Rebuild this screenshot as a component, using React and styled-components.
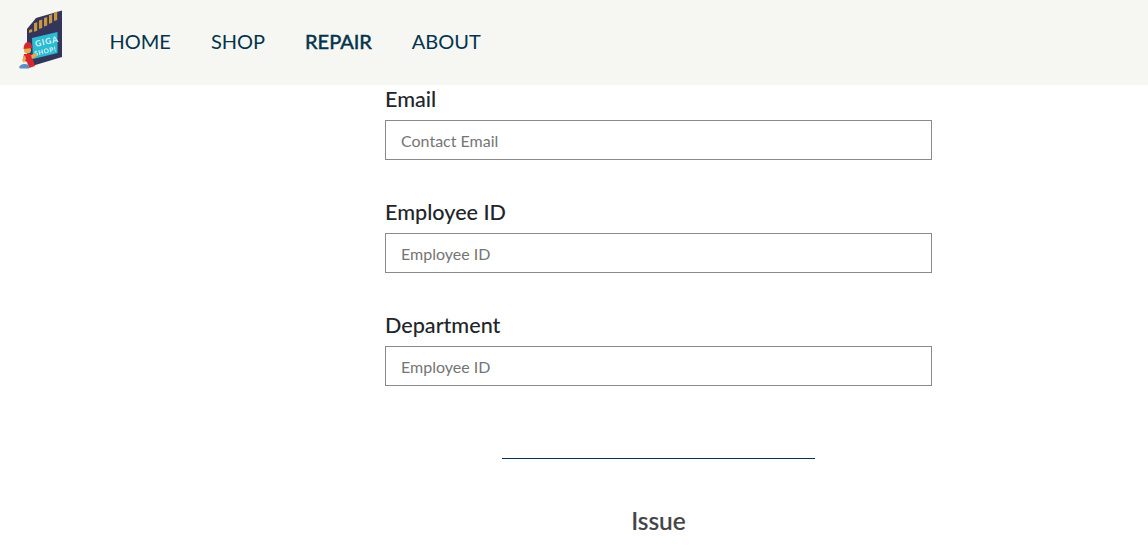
import React from "react";
import styled, { createGlobalStyle } from "styled-components";

const Global = createGlobalStyle`
    html, body {
        margin: 0;
        padding: 0;
        height: 550px;
        overflow: hidden;
        background: #ffffff;
        font-family: Lato, "Liberation Sans", sans-serif;
    }
    * { box-sizing: border-box; }
`

const Header = styled.header`
    height: 85px;
    background-color: #f6f6f2;
    display: flex;
    align-items: center;
    padding: 0 0 0 16px;
`

const Logo = styled.svg`
    width: 50px;
    height: 64px;
    display: block;
    margin-top: -5px;
    filter: blur(0.5px);
`

const Nav = styled.nav`
    display: flex;
    gap: 40px;
    margin-left: 43.5px;
    padding-bottom: 3px;
`

const NavLink = styled.a`
    font-size: 20px;
    line-height: 24px;
    color: #04344b;
    font-weight: 400;
    -webkit-text-stroke: ${(p) => (p.$active ? "0.5px #04344b" : "0")};
    text-decoration: none;
`

const Main = styled.main`
    display: flex;
    flex-direction: column;
    align-items: center;
    width: 547px;
    margin-left: 385px;
`

const Field = styled.div`
    width: 100%;
    margin-bottom: 38px;
`

const Label = styled.label`
    display: block;
    font-size: 21.6px;
    line-height: 26px;
    font-weight: 500;
    color: #212529;
    height: 35px;
    padding-top: 1px;
`

const Input = styled.input`
    display: block;
    width: 100%;
    height: 40px;
    border: 1px solid #8a8a8a;
    border-radius: 0;
    padding: 0 15px;
    font-family: inherit;
    font-size: 16px;
    outline: none;
    &::placeholder {
        color: #757575;
        opacity: 1;
    }
`

const Divider = styled.hr`
    width: 313px;
    height: 1px;
    border: 0;
    margin: 34px 0 0;
    background-color: #04344b;
`

const Issue = styled.h2`
    margin: 47px 0 0;
    font-size: 24.5px;
    line-height: 29px;
    font-weight: 500;
    color: #444444;
    -webkit-text-stroke: 0.2px #444444;
`

const contacts = [29, 34, 39, 44, 49, 54];

function SdLogo() {
    return (
        <Logo viewBox="16 8 50 64">
            <path d="M27 29 L36 18 L62 10.5 V57 L32 66 L27 60 Z" fill="#33365a" />
            <g fill="#c9973f">
                {contacts.map((x, i) => {
                    const top = 28 - i * 2.7 - (i === 0 ? -2 : 2);
                    const h = i === 0 ? 3 : 8.5;
                    return <path key={x} d={`M${x} ${top} l3.2 -1 v${h} l-3.2 1 Z`} />;
                })}
            </g>
            <path d="M32 38 L57.5 32 V53 L33 59 Z" fill="#2bbcd4" />
            <g fill="#cfeef4" fontFamily="Lato, sans-serif" fontWeight="900">
                <text x="36" y="47" fontSize="8.5" letterSpacing="0.8" transform="rotate(-13 36 47)">GIGA</text>
                <text x="35" y="56" fontSize="6.5" letterSpacing="0.5" transform="rotate(-13 35 56)">SHOP!</text>
            </g>
            <circle cx="27.5" cy="50" r="3.6" fill="#eaa94c" />
            <path d="M23.5 49 Q24 42 28 42 Q32 42 32 48 Z" fill="#d8262c" />
            <path d="M24 54 H31 L35 66 L29 68 L27 62 L23 60 Z" fill="#d8262c" />
            <path d="M31 55 L36 53 L37 56 L32 59 Z" fill="#eaa94c" />
            <path d="M19 67 Q22 62 29 65 V68.5 H20 Z" fill="#5a8fc4" />
            <path d="M22 60 L25 55 L26 59 L24 63 Z" fill="#eaa94c" />
        </Logo>
    );
}

function App() {
    return (
        <>
            <Global />
            <Header>
                <SdLogo />
                <Nav>
                    <NavLink>HOME</NavLink>
                    <NavLink>SHOP</NavLink>
                    <NavLink $active>REPAIR</NavLink>
                    <NavLink>ABOUT</NavLink>
                </Nav>
            </Header>
            <Main>
                <Field>
                    <Label>Email</Label>
                    <Input placeholder="Contact Email" />
                </Field>
                <Field>
                    <Label>Employee ID</Label>
                    <Input placeholder="Employee ID" />
                </Field>
                <Field>
                    <Label>Department</Label>
                    <Input placeholder="Employee ID" />
                </Field>
                <Divider />
                <Issue>Issue</Issue>
            </Main>
        </>
    );
}

export default App;
